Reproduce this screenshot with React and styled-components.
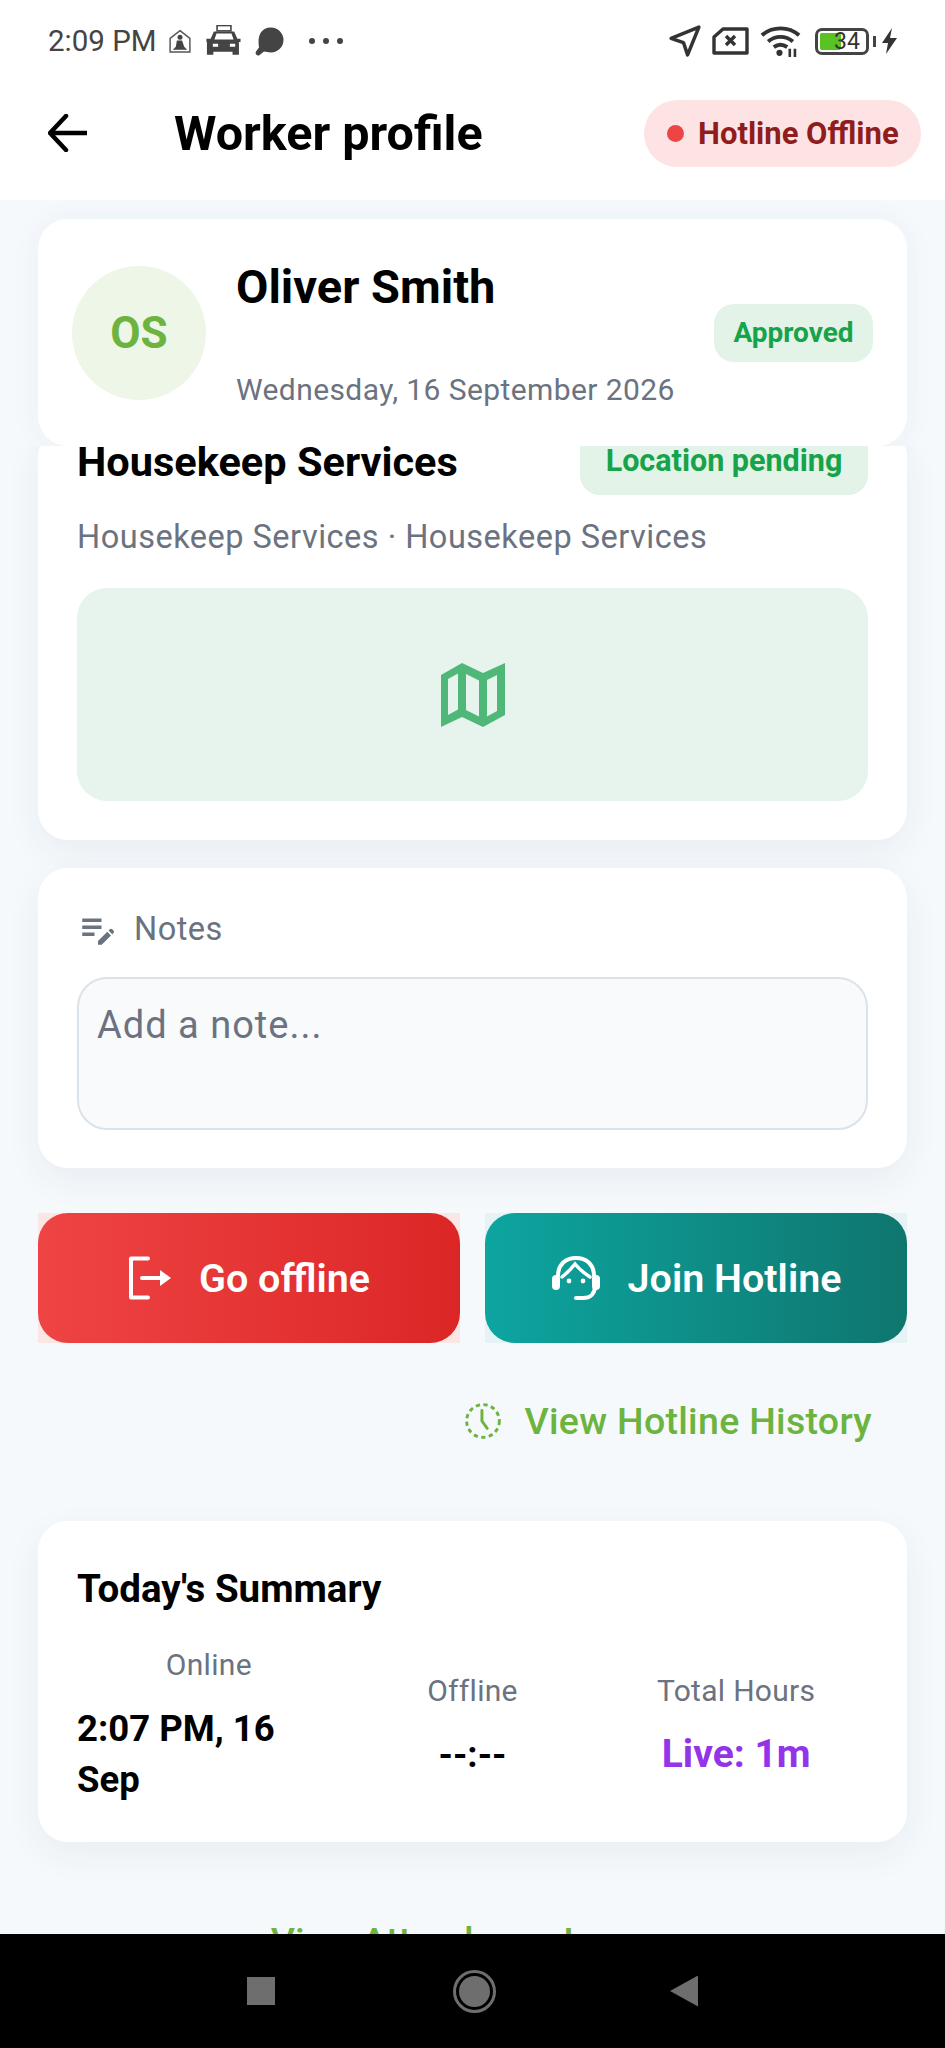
import React from "react";
import styled, { createGlobalStyle } from "styled-components";
import { MdEditNote } from "react-icons/md";

const GlobalStyle = createGlobalStyle`
  * { box-sizing: border-box; }
  html, body { margin: 0; padding: 0; background: #f5f9fc; }
  body { font-family: Roboto, "Liberation Sans", sans-serif; }
`;

export default function App() {
  return (
    <Screen>
      <GlobalStyle />
      <TopArea>
        <StatusBar>
          <StatusGroup>
            <Clock>2:09 PM</Clock>
            <HomeGlyph />
            <TaxiGlyph />
            <BubbleGlyph />
            <Dots>
              <i />
              <i />
              <i />
            </Dots>
          </StatusGroup>
          <StatusGroup $gap={10}>
            <LocationGlyph />
            <SimGlyph />
            <WifiGlyph />
            <Battery>
              <BatteryFill />
              <BatteryLabel>34</BatteryLabel>
            </Battery>
            <BatteryTip />
            <BoltGlyph />
          </StatusGroup>
        </StatusBar>
        <Header>
          <BackArrow />
          <Title>Worker profile</Title>
          <HotlinePill>
            <PillDot />
            Hotline Offline
          </HotlinePill>
        </Header>
      </TopArea>

      <PinnedCard>
        <Avatar>OS</Avatar>
        <WorkerInfo>
          <WorkerName>Oliver Smith</WorkerName>
          <WorkerDate>Wednesday, 16 September 2026</WorkerDate>
        </WorkerInfo>
        <ApprovedBadge>Approved</ApprovedBadge>
      </PinnedCard>

      <ScrollArea>
        <ScrolledCard>
          <ServiceRow>
            <ServiceName>Housekeep Services</ServiceName>
            <LocationBadge>Location pending</LocationBadge>
          </ServiceRow>
          <ServiceSub>Housekeep Services · Housekeep Services</ServiceSub>
          <MapBox>
            <MapGlyph />
          </MapBox>
        </ScrolledCard>

        <NotesCard>
          <NotesLabel>
            <MdEditNote size={42} color="#6b7280" />
            Notes
          </NotesLabel>
          <NoteInput placeholder="Add a note..." readOnly />
        </NotesCard>

        <ButtonRow>
          <ActionWrap $tint="#fbe6e6">
            <ActionButton $from="#ef4444" $to="#dc2626">
              <LogoutGlyph />
              Go offline
            </ActionButton>
          </ActionWrap>
          <ActionWrap $tint="#e6f3f4">
            <ActionButton $from="#0da5a0" $to="#0f766e">
              <AgentGlyph />
              Join Hotline
            </ActionButton>
          </ActionWrap>
        </ButtonRow>

        <HistoryLink>
          <DashedClock />
          View Hotline History
        </HistoryLink>

        <SummaryCard>
          <SummaryTitle>Today's Summary</SummaryTitle>
          <SummaryRow>
            <SummaryCol>
              <SummaryLabel>Online</SummaryLabel>
              <SummaryValue $left>
                2:07 PM, 16
                <br />
                Sep
              </SummaryValue>
            </SummaryCol>
            <SummaryCol>
              <SummaryLabel>Offline</SummaryLabel>
              <SummaryValue>--:--</SummaryValue>
            </SummaryCol>
            <SummaryCol>
              <SummaryLabel>Total Hours</SummaryLabel>
              <SummaryValue $color="#9333ea" $large>
                Live: 1m
              </SummaryValue>
            </SummaryCol>
          </SummaryRow>
        </SummaryCard>

        <AttendanceLink>View Attendance Logs &gt;</AttendanceLink>
      </ScrollArea>

      <NavBar>
        <NavSquare />
        <NavCircle />
        <NavBack />
      </NavBar>
    </Screen>
  );
}

const HomeGlyph = () => (
  <svg width="24" height="25" viewBox="0 0 22 24">
    <path d="M11 1.500 20.500 9v13H1.500V9z" fill="none" stroke="#555" strokeWidth="1.400" />
    <circle cx="11" cy="8" r="2.400" fill="#444" />
    <path d="M8 11h5l2 6 3 3H4l3-3z" fill="#444" />
  </svg>
);

const TaxiGlyph = () => (
  <svg width="36" height="32" viewBox="0 0 33 30" style={{ marginLeft: 7 }}>
    <rect x="10" y="0.500" width="13" height="5" fill="none" stroke="#444" strokeWidth="1.500" />
    <path
      d="M7 6h19l3 7h3v3h-1.500v12h-6v-3h-18v3h-6V16H0v-3h4zm2.500 2-2 5.500h18l-2-5.500zM6 17.500v3h5v-3zm16 0v3h5v-3z"
      fill="#444"
      fillRule="evenodd"
    />
  </svg>
);

const BubbleGlyph = () => (
  <svg width="29" height="31" viewBox="0 0 29 30" style={{ marginLeft: 6 }}>
    <path d="M16 1a12.500 12.500 0 0 1 0 25c-3 0-5-1-7-1l-5 4c-3 0-4-2-3-4l3-4C2 9 6 1 16 1z" fill="#444" />
  </svg>
);

const LocationGlyph = () => (
  <svg width="34" height="34" viewBox="0 0 33 33">
    <path d="M30 3 3 14l12 4 4 12z" fill="none" stroke="#333" strokeWidth="3.400" strokeLinejoin="round" />
  </svg>
);

const SimGlyph = () => (
  <svg width="37" height="28" viewBox="0 0 37 28">
    <path d="M11 2h24v24H2V10z" fill="none" stroke="#333" strokeWidth="3.400" strokeLinejoin="round" />
    <path d="m14 9 9 9m0-9-9 9" stroke="#333" strokeWidth="3.400" />
  </svg>
);

const WifiGlyph = () => (
  <svg width="43" height="33" viewBox="0 0 40 32">
    <g fill="none" stroke="#333" strokeWidth="3.800">
      <path d="M2 10c10-9 26-9 36 0" />
      <path d="M8 16c7-6 17-6 24 0" />
      <path d="M13.500 21.500c4-3 9-3 13 0" />
    </g>
    <circle cx="19" cy="27" r="3" fill="#333" />
    <path d="M29 23v8M34 23v8" stroke="#333" strokeWidth="2.500" />
  </svg>
);

const BoltGlyph = () => (
  <svg width="17" height="28" viewBox="0 0 17 28" style={{ marginLeft: -5 }}>
    <path d="M11 1 1 16h6l-2 11 11-16H9z" fill="#333" />
  </svg>
);

const BackArrow = () => (
  <svg width="39" height="38" viewBox="0 0 39 38">
    <path
      d="M18 2 2 19l16 17M3 19h36"
      fill="none"
      stroke="#000"
      strokeWidth="4.500"
      strokeLinecap="round"
      strokeLinejoin="round"
    />
  </svg>
);

const MapGlyph = () => (
  <svg width="66" height="66" viewBox="0 0 66 66">
    <path
      d="M1 13 22 1l21 10L65 1v52L43 65 22 55 1 65zM8 17v36l10-5.500V11.500zM26 12v36l13 6.500V18.500zM47 18v36.500l10-5.500V13z"
      fill="#4fb878"
      fillRule="evenodd"
    />
  </svg>
);

const LogoutGlyph = () => (
  <svg width="44" height="44" viewBox="0 0 44 44">
    <path d="M20 2.500H3v39h17" fill="none" stroke="#fff" strokeWidth="4" strokeLinecap="round" strokeLinejoin="round" />
    <path d="M14 22h19" stroke="#fff" strokeWidth="4" strokeLinecap="round" />
    <path d="M32 14l11 8-11 8z" fill="#fff" />
  </svg>
);

const AgentGlyph = () => (
  <svg width="50" height="44" viewBox="0 0 50 44">
    <g fill="none" stroke="#fff" strokeWidth="4" strokeLinecap="round">
      <path d="M7 20C7 8 15 2 25 2s18 6 18 18" />
      <path d="M11 21c5-4 9-8 13-13 4 5 9 9 15 13" strokeWidth="3.500" />
      <path d="M44 30c0 8-5 12-12 12h-7" />
    </g>
    <rect x="1" y="19" width="8" height="15" rx="4" fill="#fff" />
    <rect x="41" y="19" width="8" height="15" rx="4" fill="#fff" />
    <circle cx="18" cy="25" r="2.400" fill="#fff" />
    <circle cx="32" cy="25" r="2.400" fill="#fff" />
  </svg>
);

const DashedClock = () => (
  <svg width="38" height="38" viewBox="0 0 36 36">
    <circle cx="18" cy="18" r="15.500" fill="none" stroke="#6db33f" strokeWidth="2.800" strokeDasharray="4 3.300" />
    <path d="M17 8v10l5 7" fill="none" stroke="#6db33f" strokeWidth="2.800" strokeLinecap="round" strokeLinejoin="round" />
  </svg>
);

const Screen = styled.div`
  width: 945px;
  height: 2048px;
  display: flex;
  flex-direction: column;
  overflow: hidden;
  background: #f5f9fc;
`;

const TopArea = styled.div`
  background: #fff;
  height: 200px;
  flex-shrink: 0;
`;

const StatusBar = styled.div`
  height: 80px;
  padding: 2px 47px 0 48px;
  display: flex;
  justify-content: space-between;
  align-items: center;
`;

const StatusGroup = styled.div`
  display: flex;
  align-items: center;
  gap: ${(p) => p.$gap || 7}px;
`;

const Clock = styled.span`
  font-size: 29.500px;
  color: #444;
  margin-right: 4px;
`;

const Dots = styled.div`
  display: flex;
  gap: 8px;
  margin-left: 18px;
  i {
    width: 6px;
    height: 6px;
    border-radius: 50%;
    background: #444;
  }
`;

const Battery = styled.div`
  position: relative;
  width: 54px;
  height: 27px;
  border: 3px solid #444;
  border-radius: 7px;
  margin-left: 3px;
  padding: 2px;
`;

const BatteryFill = styled.div`
  width: 21px;
  height: 100%;
  border-radius: 2px;
  background: #58c322;
`;

const BatteryLabel = styled.span`
  position: absolute;
  left: 16px;
  top: -4px;
  font-size: 23px;
  line-height: 29px;
  color: #333;
`;

const BatteryTip = styled.div`
  width: 3px;
  height: 11px;
  background: #444;
  margin-left: -6px;
`;

const Header = styled.header`
  height: 120px;
  padding: 0 24px 14px 48px;
  display: flex;
  align-items: center;
`;

const Title = styled.h1`
  margin: 0 0 0 87px;
  flex: 1;
  font-size: 48.500px;
  font-weight: 700;
  color: #000;
`;

const HotlinePill = styled.div`
  width: 277px;
  height: 67px;
  border-radius: 34px;
  background: #fde3e3;
  color: #8f1d1d;
  font-size: 31px;
  font-weight: 700;
  display: flex;
  align-items: center;
  padding-left: 23px;
  gap: 14px;
`;

const PillDot = styled.span`
  width: 17px;
  height: 17px;
  border-radius: 50%;
  background: #ef4444;
`;

const PinnedCard = styled.section`
  flex-shrink: 0;
  margin: 19px 38px 0;
  height: 227px;
  background: #fff;
  border-radius: 30px;
  box-shadow: 0 2px 30px rgba(30, 50, 90, 0.05);
  padding: 0 34px;
  display: flex;
  align-items: center;
`;

const Avatar = styled.div`
  width: 134px;
  height: 134px;
  border-radius: 50%;
  background: #eef6e8;
  color: #6db33f;
  font-size: 44px;
  font-weight: 700;
  display: flex;
  align-items: center;
  justify-content: center;
  margin-right: 30px;
`;

const WorkerInfo = styled.div`
  flex: 1;
  height: 148px;
  display: flex;
  flex-direction: column;
  justify-content: space-between;
  margin-top: 5px;
`;

const WorkerName = styled.div`
  font-size: 47px;
  font-weight: 700;
  line-height: 52px;
  color: #000;
`;

const WorkerDate = styled.div`
  font-size: 30px;
  line-height: 38px;
  letter-spacing: 0.400px;
  color: #6b7280;
`;

const ApprovedBadge = styled.div`
  width: 159px;
  height: 58px;
  border-radius: 20px;
  background: #e3f3e8;
  color: #16a34a;
  font-size: 28px;
  font-weight: 700;
  display: flex;
  align-items: center;
  justify-content: center;
`;

const ScrollArea = styled.div`
  position: relative;
  flex: 1;
  min-height: 0;
  overflow: hidden;
  padding: 0 38px;
`;

const Card = styled.section`
  background: #fff;
  border-radius: 30px;
  box-shadow: 0 12px 36px rgba(30, 50, 90, 0.06);
`;

const ScrolledCard = styled(Card)`
  margin-top: -20px;
  height: 414px;
  padding: 0 39px;
`;

const ServiceRow = styled.div`
  display: flex;
  justify-content: space-between;
  height: 69px;
`;

const ServiceName = styled.div`
  font-size: 41.500px;
  font-weight: 700;
  line-height: 42px;
  margin-top: 15px;
  color: #000;
`;

const LocationBadge = styled.div`
  width: 288px;
  height: 69px;
  border-radius: 20px;
  background: #e3f3e8;
  color: #16a34a;
  font-size: 30.500px;
  font-weight: 700;
  display: flex;
  align-items: center;
  justify-content: center;
`;

const ServiceSub = styled.div`
  margin-top: 22px;
  font-size: 32.500px;
  line-height: 40px;
  letter-spacing: 0.500px;
  color: #6b7280;
`;

const MapBox = styled.div`
  margin-top: 31px;
  height: 213px;
  border-radius: 30px;
  background: #e7f4ee;
  display: flex;
  align-items: center;
  justify-content: center;
`;

const NotesCard = styled(Card)`
  margin-top: 28px;
  height: 300px;
  padding: 39px 39px 0;
`;

const NotesLabel = styled.div`
  display: flex;
  align-items: center;
  gap: 15px;
  font-size: 32.500px;
  line-height: 44px;
  letter-spacing: 0.500px;
  color: #6b7280;
`;

const NoteInput = styled.textarea`
  display: block;
  width: 100%;
  height: 153px;
  margin-top: 26px;
  padding: 24px 18px;
  border: 2px solid #dbe3ea;
  border-radius: 30px;
  background: #f8fafc;
  resize: none;
  outline: none;
  font-family: inherit;
  font-size: 38px;
  line-height: 44px;
  letter-spacing: 1px;
  &::placeholder {
    color: #6b7280;
    opacity: 1;
  }
`;

const ButtonRow = styled.div`
  margin-top: 45px;
  display: grid;
  grid-template-columns: 422px 422px;
  justify-content: space-between;
`;

const ActionWrap = styled.div`
  background: ${(p) => p.$tint};
`;

const ActionButton = styled.div`
  height: 130px;
  border-radius: 30px;
  background: linear-gradient(90deg, ${(p) => p.$from}, ${(p) => p.$to});
  color: #fff;
  font-size: 39.500px;
  font-weight: 600;
  display: flex;
  align-items: center;
  justify-content: center;
  gap: 27px;
`;

const HistoryLink = styled.div`
  margin-top: 55px;
  padding-right: 35px;
  display: flex;
  justify-content: flex-end;
  align-items: center;
  gap: 22px;
  font-size: 37.500px;
  font-weight: 500;
  line-height: 46px;
  letter-spacing: 0.300px;
  color: #6db33f;
`;

const SummaryCard = styled(Card)`
  margin-top: 77px;
  height: 321px;
  padding: 44px 39px 0;
`;

const SummaryTitle = styled.div`
  font-size: 38.500px;
  font-weight: 700;
  line-height: 48px;
  color: #000;
`;

const SummaryRow = styled.div`
  margin-top: 33px;
  display: grid;
  grid-template-columns: repeat(3, 1fr);
  align-items: center;
`;

const SummaryCol = styled.div`
  display: flex;
  flex-direction: column;
  align-items: center;
  gap: 19px;
`;

const SummaryLabel = styled.div`
  font-size: 30px;
  line-height: 38px;
  letter-spacing: 0.300px;
  color: #6b7280;
`;

const SummaryValue = styled.div`
  align-self: ${(p) => (p.$left ? "flex-start" : "center")};
  font-size: ${(p) => (p.$large ? 39 : 36.500)}px;
  font-weight: 700;
  line-height: 51px;
  color: ${(p) => p.$color || "#000"};
`;

const AttendanceLink = styled.div`
  margin-top: 76px;
  text-align: center;
  font-size: 37.500px;
  font-weight: 500;
  line-height: 46px;
  color: #6db33f;
`;

const NavBar = styled.nav`
  height: 114px;
  flex-shrink: 0;
  background: #000;
  display: flex;
  align-items: center;
  justify-content: center;
  position: relative;
`;

const NavSquare = styled.div`
  width: 28px;
  height: 28px;
  background: #6e6e6e;
  margin-right: 178px;
`;

const NavCircle = styled.div`
  width: 43px;
  height: 43px;
  border-radius: 50%;
  border: 3px solid #6e6e6e;
  padding: 3px;
  background: #6e6e6e;
  background-clip: content-box;
  margin-right: 174px;
`;

const NavBack = styled.div`
  width: 28px;
  height: 31px;
  background: #6e6e6e;
  clip-path: polygon(100% 0, 100% 100%, 0 50%);
`;
